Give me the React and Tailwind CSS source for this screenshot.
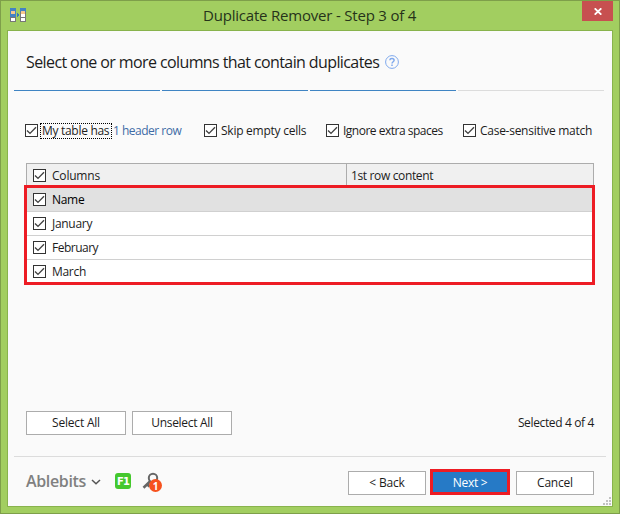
import React from "react";

function Check() {
  return (
    <span className="block h-[13px] w-[13px] shrink-0 border border-[#333] bg-white">
      <svg width="11" height="11" viewBox="0 0 11 11" fill="none" className="block">
        <path d="M1 5.4L4 8.4L10 2.2" stroke="#404040" strokeWidth="1.35" />
      </svg>
    </span>
  );
}

function Text({ className = "", children }) {
  return <span className={"block whitespace-nowrap " + className}>{children}</span>;
}

function Row({ label, className, spacing }) {
  return (
    <div className={"flex items-start pl-[6px] pt-[5px] " + className}>
      <Check />
      <Text className={"ml-[6px] -mt-[1px] leading-[16px] " + spacing}>{label}</Text>
    </div>
  );
}

function Button({ className = "", children }) {
  return (
    <button className={"flex h-6 items-center justify-center whitespace-nowrap border border-[#acacac] bg-white leading-none " + className}>
      {children}
    </button>
  );
}

function AppIcon() {
  return (
    <svg width="16" height="14" viewBox="0 0 16 14" shapeRendering="crispEdges" className="block">
      <path d="M0 0h6v14H0zM10 0h6v14h-6z" fill="#777" />
      <path d="M0 0h6v9H0zM10 0h6v4h-6z" fill="#4283c4" />
      <path d="M1 3h4v3H1zM11 3h4v3h-4z" fill="#f8c78c" />
      <path d="M1 10h4v3H1zM11 6h4v3h-4zM11 10h4v3h-4z" fill="#fff" />
      <path d="M7 5h1v1h1v2H8v1H7z" fill="#3979b7" />
    </svg>
  );
}

export default function App() {
  return (
    <div className="flex h-[514px] w-[620px] flex-col border border-[#7e9f4a] bg-[#a2ce60] px-[6px] pb-[6px] font-['Open_Sans','Noto_Sans',sans-serif] text-[12px] text-[#1c1c1c]">
      <header className="flex h-[29px] shrink-0 items-start">
        <div className="ml-[3px] mt-[7px] w-[20px]"><AppIcon /></div>
        <Text className="ml-[173px] mt-[4px] w-[220px] text-[15px] leading-[21px] tracking-[-0.2px] text-[#26331a]">Duplicate Remover - Step 3 of 4</Text>
        <button className="ml-auto flex h-5 w-[31px] items-center justify-center bg-[#c75050]">
          <svg width="8" height="7" viewBox="0 0 8 7" className="mt-[1px]"><path d="M.7.3L7.3 6.7M7.3.3L.7 6.7" stroke="#fff" strokeWidth="1.8" /></svg>
        </button>
      </header>

      <main className="flex h-[477px] flex-col border border-[#88b34c] bg-[#fafafa]">
        <div className="flex h-[59px] items-start pl-[18px]">
          <Text className="mt-[20px] w-[359px] text-[16px] leading-[23px] tracking-[-0.6px]">Select one or more columns that contain duplicates</Text>
          <svg width="14" height="14" viewBox="0 0 14 14" fill="none" stroke="#7fa9ed" className="mt-[24px]">
            <circle cx="7" cy="7" r="6.4" />
            <path d="M4.8 5.2C5 2.8 9.1 2.9 9.1 5.2C9.1 6.7 7 6.8 7 8.6" strokeWidth="1.5" />
            <path d="M7 9.6v1.5" strokeWidth="1.5" />
          </svg>
        </div>
        <div className="flex gap-[2px] pl-[6px]">
          <span className="h-px w-[146px] bg-[#3f84c3]" />
          <span className="h-px w-[146px] bg-[#3f84c3]" />
          <span className="h-px w-[146px] bg-[#3f84c3]" />
          <span className="h-px w-[146px] bg-[#dcdcdc]" />
        </div>

        <div className="mt-[32px] flex h-[16px] items-start pl-[17px] leading-[16px]">
          <div className="flex w-[179px] items-start pt-[1px]">
            <Check />
            <div className="-mt-[1px] ml-[2px] h-[16px] w-[72px] border border-dotted border-black pl-[1px]">
              <Text className="-mt-[1px] tracking-[-0.3px]">My table has</Text>
            </div>
            <Text className="ml-[1px] -mt-[1px] tracking-[-0.5px] text-[#3e6ca6]">1 header row</Text>
          </div>
          <div className="flex w-[122px] gap-[4px] pt-[1px]"><Check /><Text className="-mt-[1px] tracking-[-0.25px]">Skip empty cells</Text></div>
          <div className="flex w-[137px] gap-[4px] pt-[1px]"><Check /><Text className="-mt-[1px] tracking-[-0.5px]">Ignore extra spaces</Text></div>
          <div className="flex gap-[4px] pt-[1px]"><Check /><Text className="-mt-[1px] tracking-[-0.27px]">Case-sensitive match</Text></div>
        </div>

        <div className="ml-[18px] mt-[24px] flex h-[22px] w-[568px] border border-b-0 border-[#acacac] bg-[#f0f0f0]">
          <Row label="Columns" className="w-[319px]" spacing="tracking-[-0.2px]" />
          <div className="flex-1 border-l border-[#acacac] pl-[4px] pt-[4px]"><Text className="leading-[16px] tracking-[-0.36px]">1st row content</Text></div>
        </div>
        <div className="ml-[16px] h-[100px] w-[571px] border-[3px] border-[#ed1c24] bg-white">
          <Row label="Name" className="h-[24px] border-b border-[#d0d0d0] bg-[#e1e1e1] text-black" spacing="tracking-[-0.3px]" />
          <Row label="January" className="h-[24px] border-b border-[#d0d0d0]" spacing="tracking-[-0.3px]" />
          <Row label="February" className="h-[24px] border-b border-[#d0d0d0]" spacing="tracking-[-0.5px]" />
          <Row label="March" className="h-[22px]" spacing="tracking-[-0.3px]" />
        </div>

        <div className="mt-[126px] flex gap-[6px] pl-[18px]">
          <Button className="w-[100px] tracking-[-0.2px]">Select All</Button>
          <Button className="w-[100px] tracking-[-0.3px]">Unselect All</Button>
          <Text className="ml-auto mr-[18px] leading-[24px] tracking-[-0.36px]">Selected 4 of 4</Text>
        </div>

        <div className="mx-[6px] mt-[21px] h-px bg-[#dcdcdc]" />
        <footer className="flex h-[49px] items-start pl-[18px]">
          <Text className="mt-[13px] w-[65px] text-[16px] font-semibold leading-[22px] tracking-[-0.35px] text-[#808080]">Ablebits</Text>
          <svg width="10" height="6" viewBox="0 0 10 6" fill="none" className="mt-[22px]"><path d="M1 1L5 4.8L9 1" stroke="#555" strokeWidth="1.5" /></svg>
          <span className="ml-[14px] mt-[16px] flex h-4 w-4 items-center justify-center rounded-[3px] bg-[#45c82d] pt-[1px] font-['DejaVu_Sans'] text-[10px] font-bold leading-none tracking-[-0.8px] text-white">F1</span>
          <div className="relative ml-[11px] mt-[15px] h-[20px] w-[21px]">
            <svg width="18" height="18" viewBox="0 0 18 18" fill="none" stroke="#666" className="block">
              <circle cx="11" cy="6" r="4.2" strokeWidth="2" />
              <path d="M8.5 9L1.5 15.8M5 12l2.5 2.5" strokeWidth="2.6" />
            </svg>
            <span className="absolute left-[7px] top-[7px] flex h-[13px] w-[13px] items-center justify-center rounded-full bg-[#f6511d] text-[10px] font-bold leading-none text-white">1</span>
          </div>
          <Button className="ml-auto mt-[14px] w-[78px] tracking-[-0.15px]">&lt; Back</Button>
          <button className="ml-[4px] mt-[12px] flex h-[26px] w-[80px] items-center justify-center border-[3px] border-[#ed1c24] bg-[#267ac6] pt-[2px] leading-none tracking-[-0.3px] text-white">Next &gt;</button>
          <Button className="ml-[6px] mt-[14px] w-[78px] tracking-[-0.2px]">Cancel</Button>
          <svg width="8" height="8" viewBox="0 0 8 8" shapeRendering="crispEdges" className="ml-[9px] mr-[1px] mt-[40px] shrink-0">
            <path d="M6 0h2v2H6zM3 3h2v2H3zM6 3h2v2H6zM0 6h2v2H0zM3 6h2v2H3zM6 6h2v2H6z" fill="#c1c1c1" />
          </svg>
        </footer>
      </main>
    </div>
  );
}
